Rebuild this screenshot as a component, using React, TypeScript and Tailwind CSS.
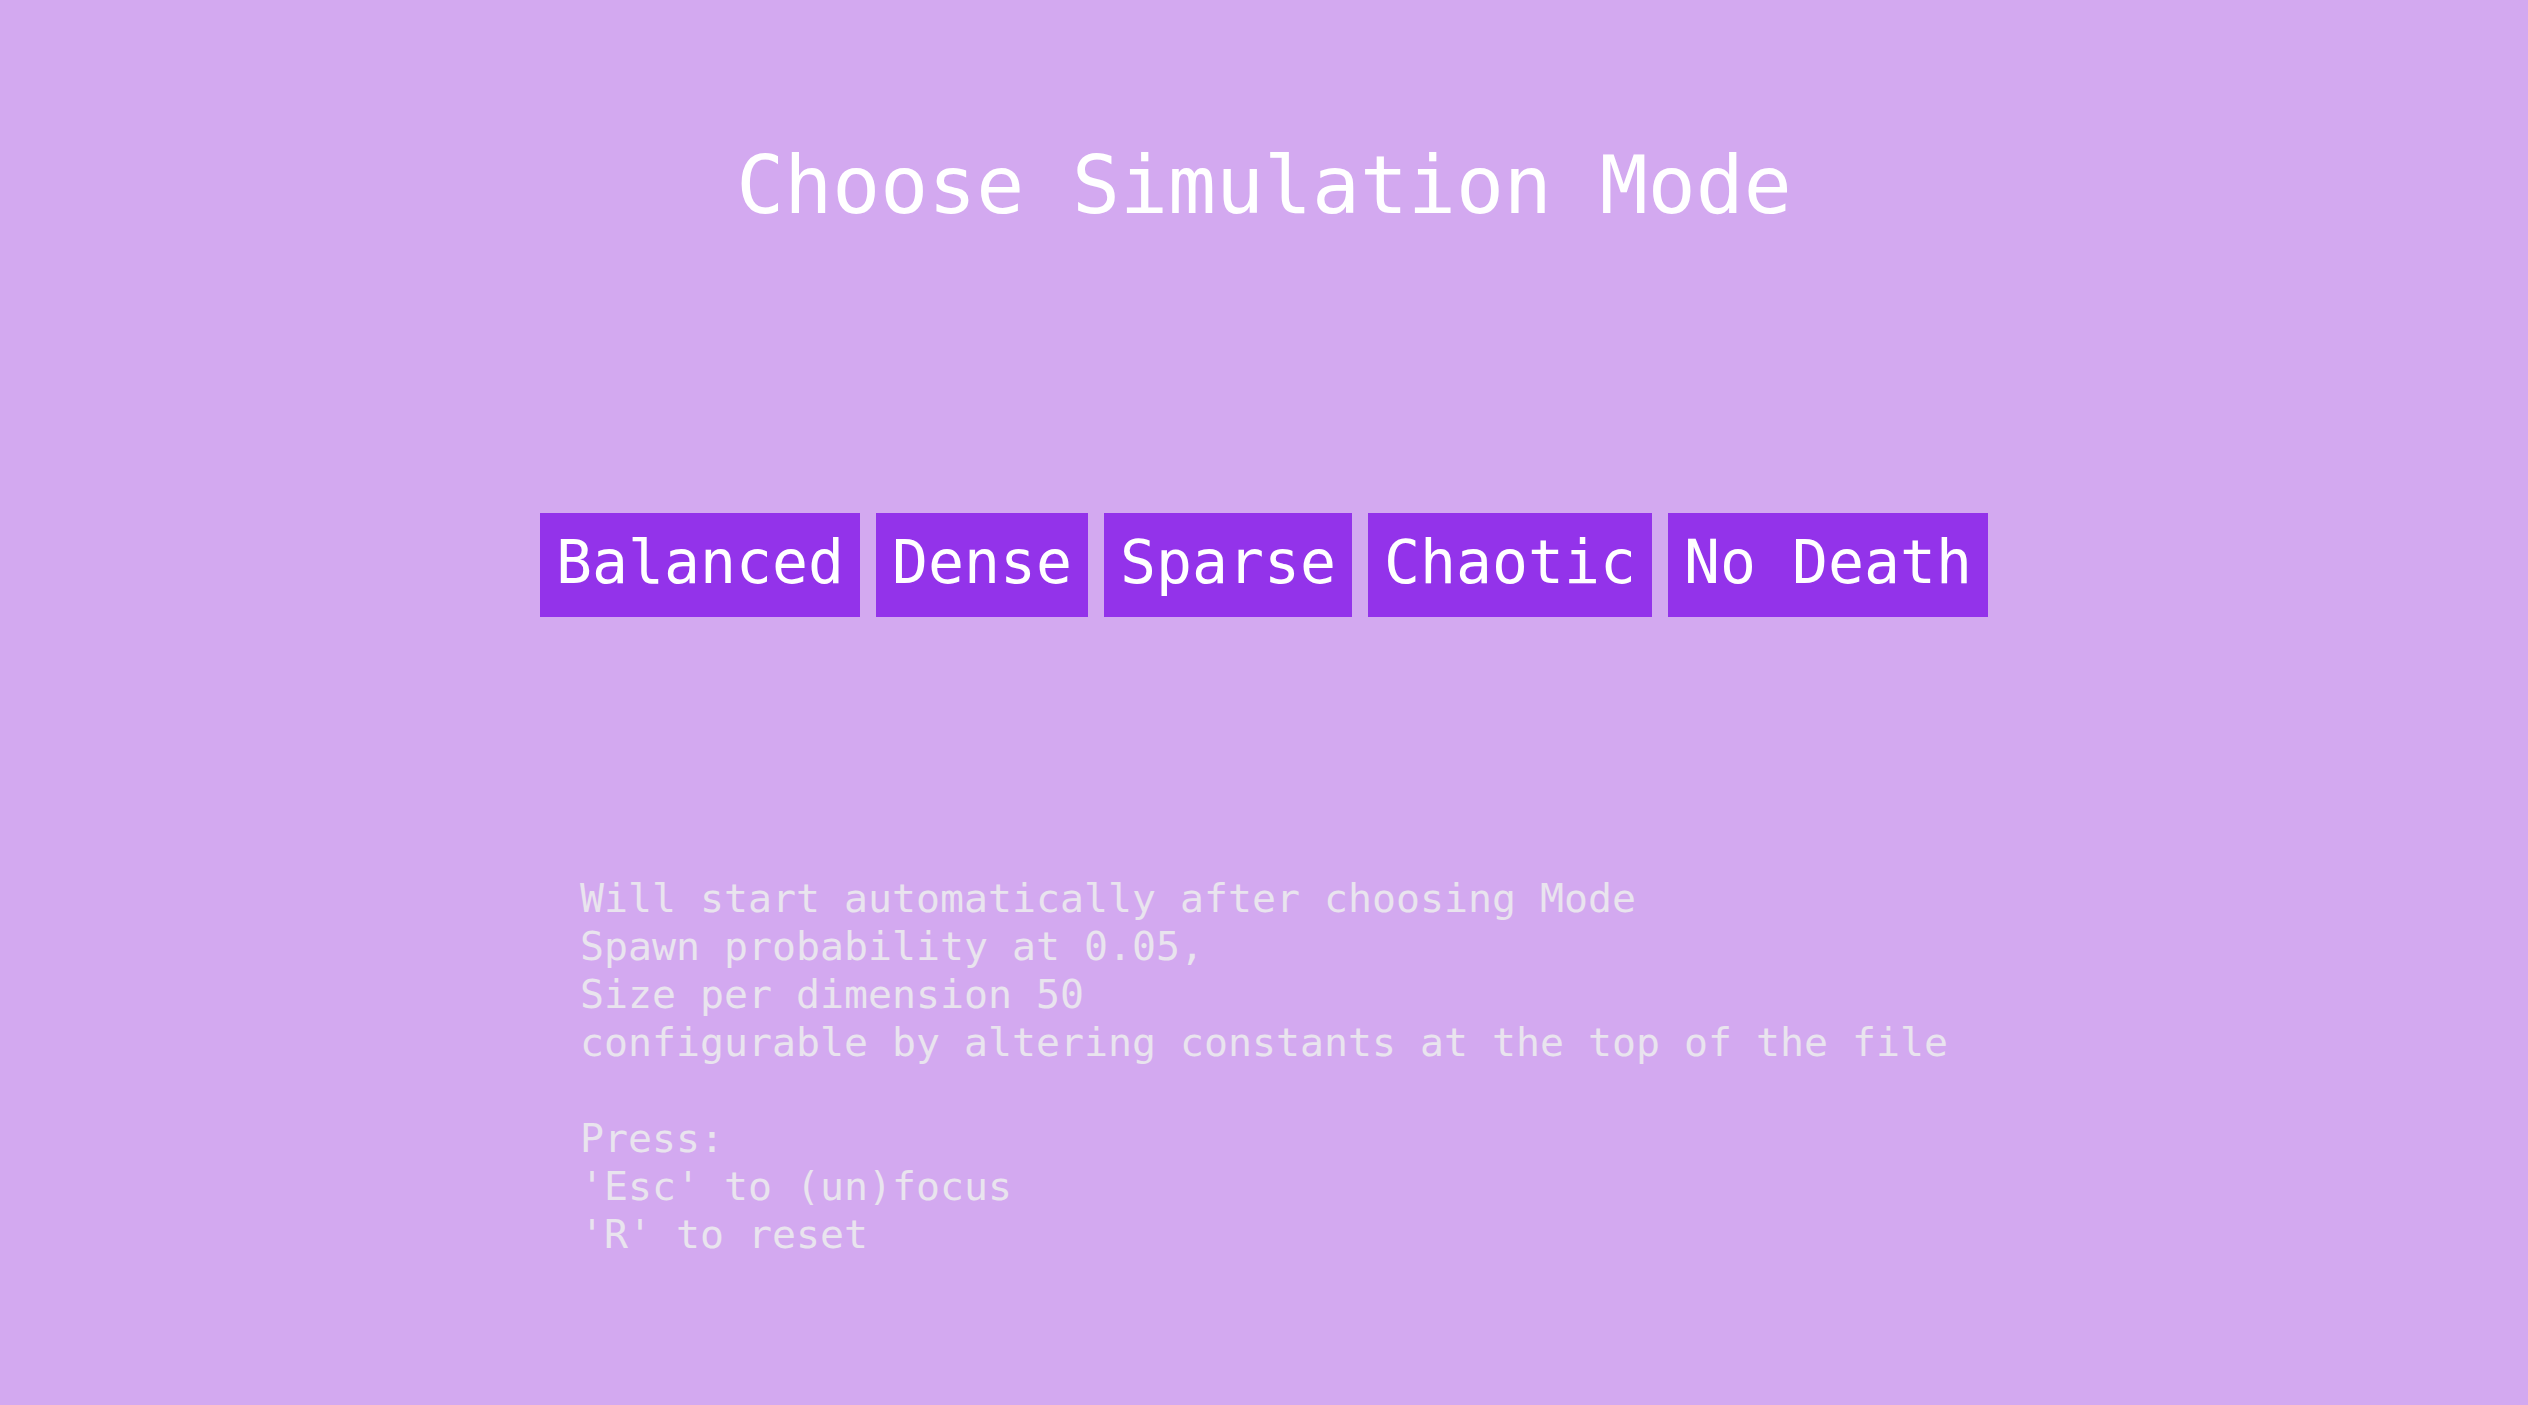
export default function App() {
  const modes = ["Balanced", "Dense", "Sparse", "Chaotic", "No Death"];
  return (
    <div className="min-h-screen w-full bg-[#d3a9f0] flex flex-col items-center pt-[146px] font-['DejaVu_Sans_Mono','Liberation_Mono',monospace]">
      <h1 className="text-[79.7px] leading-[80px] text-white font-normal">Choose Simulation Mode</h1>
      <div className="flex gap-4 mt-[287px]">
        {modes.map((m) => (
          <button
            key={m}
            className="h-[104px] px-4 bg-[#9333ea] text-white text-[59.8px] leading-[98px] pb-[6px] whitespace-pre font-['DejaVu_Sans_Mono','Liberation_Mono',monospace]"
          >
            {m}
          </button>
        ))}
      </div>
      <pre className="mt-[257px] text-[39.87px] leading-[48px] text-[#e9e4ee] text-left font-['DejaVu_Sans_Mono','Liberation_Mono',monospace]">
{`Will start automatically after choosing Mode
Spawn probability at 0.05,
Size per dimension 50
configurable by altering constants at the top of the file

Press:
'Esc' to (un)focus
'R' to reset`}
      </pre>
    </div>
  );
}
